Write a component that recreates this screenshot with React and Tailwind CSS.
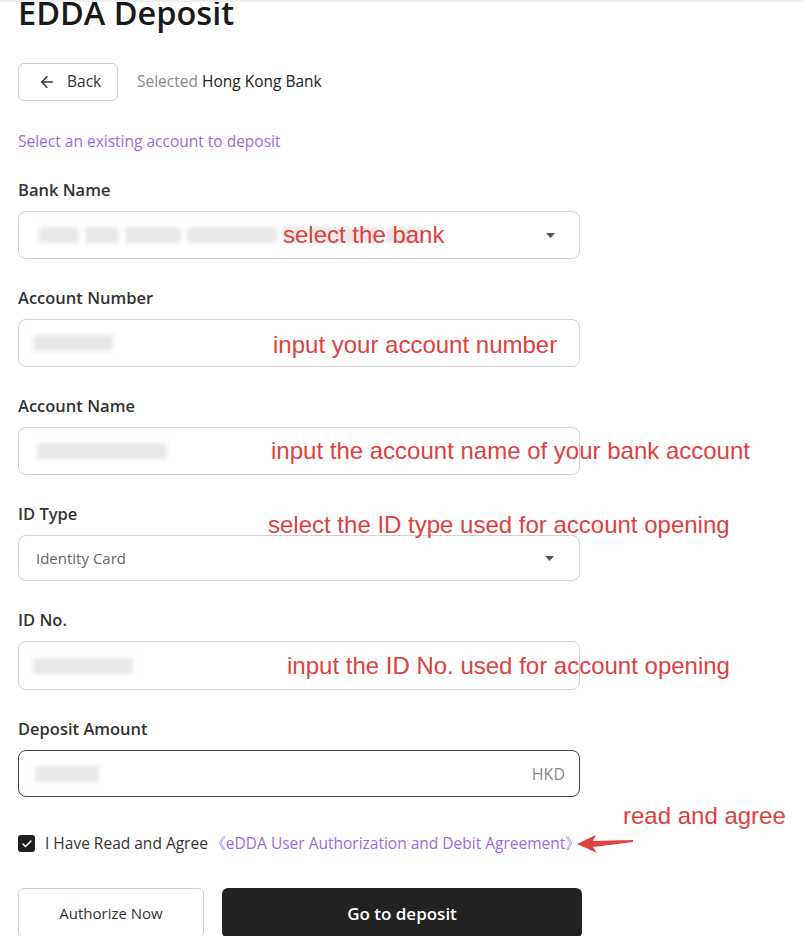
import { ArrowLeft, Check } from "lucide-react";

function Blur({ widths, className = "" }) {
  // masked personal data, shown as soft grey blocks
  return (
    <div className={`flex items-center gap-[6px] blur-[2px] ${className}`}>
      {widths.map((w, i) => (
        <div key={i} className="h-[16px] bg-[#e8e8e8]" style={{ width: w }} />
      ))}
    </div>
  );
}

function Caret() {
  return (
    <svg width="9" height="5" viewBox="0 0 9 5" className="shrink-0">
      <path d="M0 0h9L4.5 5z" fill="#555" />
    </svg>
  );
}

function Field({ label, children, className = "" }) {
  return (
    <div className={className}>
      <div className="h-[24px] leading-[24px] text-[16.5px] font-semibold text-[#333]">{label}</div>
      <div className="mt-[9px]">{children}</div>
    </div>
  );
}

function Box({ children, dark, h = "h-[48px]" }) {
  return (
    <div
      className={`${h} w-[562px] rounded-[8px] border ${
        dark ? "border-[#444]" : "border-[#d2d2d2]"
      } flex items-center px-[10px]`}
    >
      {children}
    </div>
  );
}

export default function App() {
  return (
    <div className="relative w-[803px] h-[936px] overflow-hidden bg-white border-t-2 border-[#f0f0f0] font-['Open_Sans','Noto_Sans',sans-serif]">
      <div className="px-[18px]">
        <h1 className="text-[32.5px] leading-[38px] font-semibold text-[#1a1a1a] mt-[-8px]">EDDA Deposit</h1>

        <div className="flex items-center mt-[31px]">
          <button className="h-[38px] w-[100px] rounded-[6px] border border-[#cfcfcf] flex items-center pl-[19px] gap-[11px] text-[15.5px] text-[#333]">
            <ArrowLeft size={18} strokeWidth={2} />
            Back
          </button>
          <div className="ml-[19px] text-[15.5px] text-[#888]">
            Selected <span className="text-[#222]">Hong Kong Bank</span>
          </div>
        </div>

        <p className="mt-[30px] text-[15.5px] leading-[20px] text-[#9b6bdd]">Select an existing account to deposit</p>

        <Field label="Bank Name" className="mt-[27px]">
          <Box>
            <Blur widths={[40, 34, 56, 90, 20, 70, 36]} className="flex-1 ml-[10px]" />
            <div className="w-[40px] flex justify-end pr-[14px]">
              <Caret />
            </div>
          </Box>
        </Field>

        <Field label="Account Number" className="mt-[27px]">
          <Box>
            <Blur widths={[80]} className="ml-[4px]" />
          </Box>
        </Field>

        <Field label="Account Name" className="mt-[27px]">
          <Box>
            <Blur widths={[130]} className="ml-[8px]" />
          </Box>
        </Field>

        <Field label="ID Type" className="mt-[27px]">
          <Box h="h-[46px]">
            <span className="ml-[7px] flex-1 text-[15px] text-[#666]">Identity Card</span>
            <div className="pr-[15px]">
              <Caret />
            </div>
          </Box>
        </Field>

        <Field label="ID No." className="mt-[27px]">
          <Box h="h-[49px]">
            <Blur widths={[100]} className="ml-[4px]" />
          </Box>
        </Field>

        <Field label="Deposit Amount" className="mt-[27px]">
          <Box dark h="h-[47px]">
            <Blur widths={[64]} className="ml-[6px] flex-1" />
            <span className="pr-[4px] text-[16px] text-[#888]">HKD</span>
          </Box>
        </Field>

        <div className="flex items-center mt-[35px] text-[15.5px]">
          <div className="w-[17px] h-[17px] rounded-[3px] bg-[#1f1f1f] flex items-center justify-center">
            <Check size={12} strokeWidth={3} color="#fff" />
          </div>
          <span className="ml-[10px] text-[#333]">I Have Read and Agree</span>
          <span className="ml-[2px] text-[#9b6bdd]">《eDDA User Authorization and Debit Agreement》</span>
        </div>

        <div className="flex mt-[33px] gap-[18px]">
          <button className="h-[50px] w-[186px] rounded-[6px] border border-[#cfcfcf] text-[15px] text-[#333]">
            Authorize Now
          </button>
          <button className="h-[50px] w-[360px] rounded-[6px] bg-[#222] text-[17px] font-semibold text-white">
            Go to deposit
          </button>
        </div>
      </div>

      {/* red annotations laid over the form */}
      <div className="font-['Liberation_Sans',Arial,sans-serif] text-[24px] leading-[28px] text-[#e0403f]">
        <span className="absolute left-[283px] top-[219px]">select the bank</span>
        <span className="absolute left-[273px] top-[329px]">input your account number</span>
        <span className="absolute left-[271px] top-[435px]">input the account name of your bank account</span>
        <span className="absolute left-[268px] top-[509px]">select the ID type used for account opening</span>
        <span className="absolute left-[287px] top-[650px]">input the ID No. used for account opening</span>
        <span className="absolute left-[623px] top-[800px]">read and agree</span>
        <svg className="absolute left-[575px] top-[830px]" width="60" height="24" viewBox="0 0 60 24">
          <path d="M2 12 L21 3 L18 9 L58 8 L58 10 L18 15 L22 21 Z" fill="#e0403f" />
        </svg>
      </div>
    </div>
  );
}
